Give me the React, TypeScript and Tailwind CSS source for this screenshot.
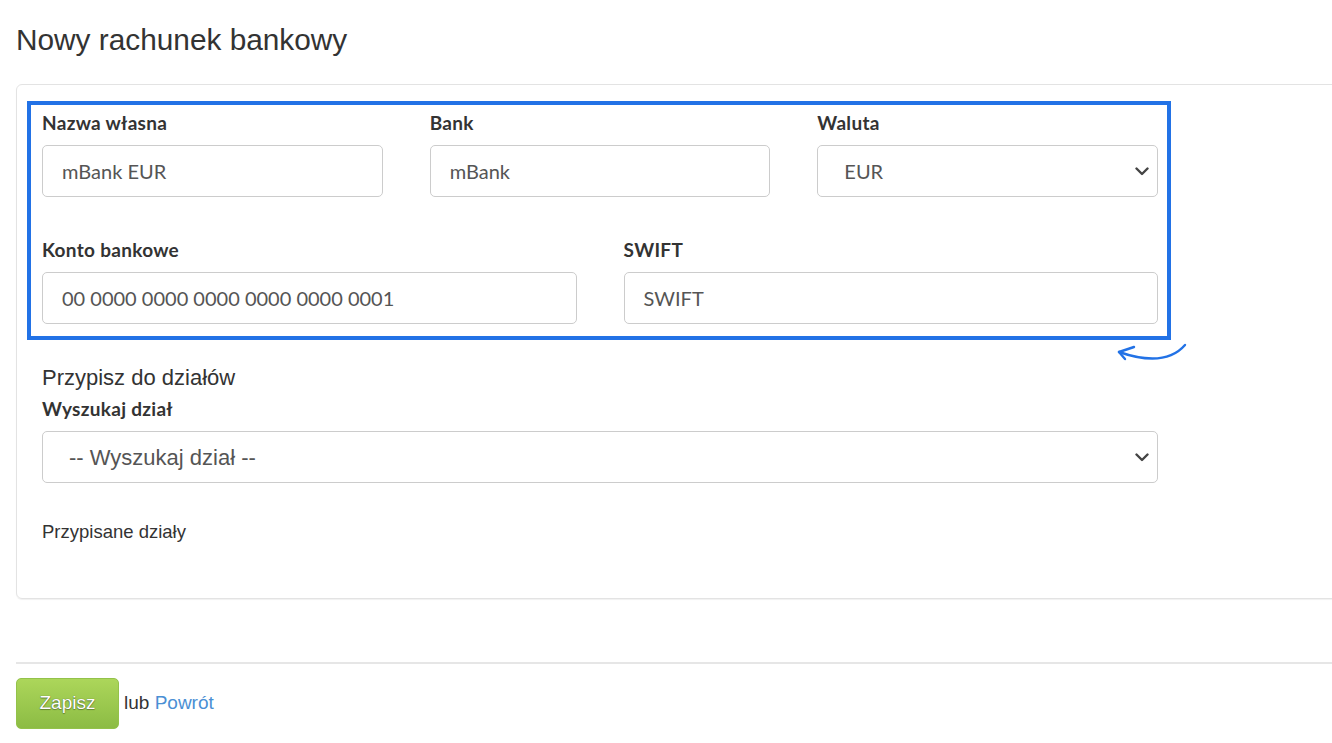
import React from "react";

const arial = { fontFamily: '"Liberation Sans", Arial, sans-serif' };
const lato = { fontFamily: 'Lato, "Liberation Sans", sans-serif' };

function Chevron() {
  return (
    <svg width="14" height="9" viewBox="0 0 14 9" className="shrink-0">
      <path d="M1.5 1.5 L7 7 L12.5 1.5" fill="none" stroke="#444" strokeWidth="2.4" strokeLinecap="round" strokeLinejoin="round" />
    </svg>
  );
}

function Label({ children }: { children: React.ReactNode }) {
  return (
    <div className="text-[19px] leading-[24px] font-bold text-[#333] mb-[10px] tracking-[0.3px]" style={lato}>
      {children}
    </div>
  );
}

function Field({ label, value }: { label: string; value: string }) {
  return (
    <div>
      <Label>{label}</Label>
      <div
        className="h-[52px] border border-[#cccccc] rounded-[5px] flex items-center pl-[19px] text-[20px] text-[#555] bg-white"
        style={lato}
      >
        {value}
      </div>
    </div>
  );
}

export default function App() {
  return (
    <div className="w-[1332px] h-[743px] overflow-hidden bg-white relative" style={arial}>
      <div className="pl-[16px] pt-[23px]">
        <h1 className="text-[29.8px] leading-[33px] text-[#333] font-normal mb-[28px]">Nowy rachunek bankowy</h1>

        <div className="w-[1340px] border border-[#e3e3e3] rounded-[6px] pt-[16px] pl-[10px] pb-[54px] shadow-[0_1px_1px_rgba(0,0,0,0.06)]">
          <div className="w-[1144px] border-[4px] border-[#2272e6] pt-[6px] pl-[11px] pr-[9px] pb-[12px]">
            <div className="grid grid-cols-3 gap-x-[47px]">
              <Field label="Nazwa własna" value="mBank EUR" />
              <Field label="Bank" value="mBank" />
              <div>
                <Label>Waluta</Label>
                <div
                  className="h-[52px] border border-[#cccccc] rounded-[5px] flex items-center justify-between pl-[26px] pr-[8px] text-[20px] text-[#555] bg-white"
                  style={lato}
                >
                  <span>EUR</span>
                  <Chevron />
                </div>
              </div>
            </div>
            <div className="grid grid-cols-2 gap-x-[47px] mt-[41px]">
              <Field label="Konto bankowe" value="00 0000 0000 0000 0000 0000 0001" />
              <Field label="SWIFT" value="SWIFT" />
            </div>
          </div>

          <div className="pl-[15px] w-[1131px]">
            <div className="mt-[26px] text-[22px] leading-[24px] text-[#333]">Przypisz do działów</div>
            <div className="mt-[7px]">
              <Label>Wyszukaj dział</Label>
            </div>
            <div className="h-[52px] border border-[#cccccc] rounded-[5px] flex items-center justify-between pl-[26px] pr-[8px] text-[22px] text-[#555] bg-white">
              <span>-- Wyszukaj dział --</span>
              <Chevron />
            </div>
            <div className="mt-[37px] text-[18.5px] leading-[24px] text-[#333]">Przypisane działy</div>
          </div>
        </div>

        <div className="mt-[63px] h-[2px] w-[1340px] bg-[#e6e6e6]"></div>

        <div className="mt-[14px] flex items-center">
          <div
            className="w-[103px] h-[51px] rounded-[5px] border border-[#93c24a] bg-gradient-to-b from-[#acd65a] to-[#8cbc44] flex items-center justify-center text-[19px] text-white [text-shadow:0_0_1px_rgba(0,0,0,0.55),0_1px_1px_rgba(0,0,0,0.3)]"
          >
            Zapisz
          </div>
          <span className="ml-[5px] text-[19px] text-[#333]">
            lub <span className="text-[#4a8fd4]">Powrót</span>
          </span>
        </div>
      </div>

      <svg className="absolute left-[1110px] top-[338px]" width="90" height="34" viewBox="0 0 90 34">
        <path d="M75 7 Q55 30 9 14" fill="none" stroke="#2272e6" strokeWidth="2.4" strokeLinecap="round" />
        <path d="M24 9 L9 14 L15 21" fill="none" stroke="#2272e6" strokeWidth="2.4" strokeLinecap="round" strokeLinejoin="round" />
      </svg>
    </div>
  );
}
